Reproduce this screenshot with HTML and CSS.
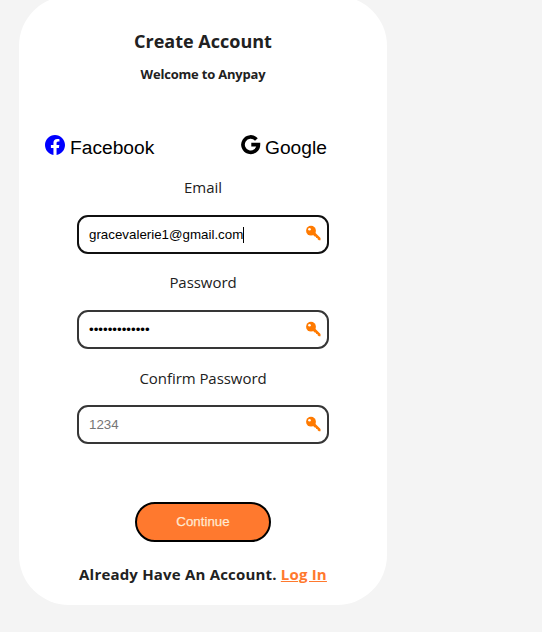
FILE: index.html
```
<!DOCTYPE html>
<html lang="en">
<head>
<meta charset="utf-8">
<title>Create Account</title>
<link rel="stylesheet" href="styles.css">
</head>
<body>
<svg width="0" height="0" class="defs" aria-hidden="true">
  <symbol id="key" viewBox="0 0 16 16">
    <circle cx="6" cy="5.700" r="4.900"/>
    <path d="M9.300 6.800 15.500 13v2.300h-1.600l-1.200-1.100-.3-1.100-1.200-.2-.3-1.200-1.200-.2L7 9z"/>
    <circle cx="4.500" cy="4.300" r="1.300" fill="#fff"/>
  </symbol>
</svg>
<main class="card">
  <h1 class="title"><span>Create Account</span></h1>
  <p class="subtitle"><span>Welcome to Anypay</span></p>
  <div class="socials">
    <div class="social">
      <svg class="fb" viewBox="0 0 24 24"><path d="M24 12.070C24 5.410 18.630 0 12 0S0 5.410 0 12.070C0 18.100 4.390 23.090 10.130 24v-8.440H7.080v-3.490h3.050V9.410c0-3.020 1.790-4.690 4.530-4.690 1.310 0 2.680.24 2.680.24v2.970h-1.510c-1.490 0-1.960.93-1.960 1.890v2.250h3.330l-.53 3.490h-2.800V24C19.610 23.090 24 18.100 24 12.070z"/></svg>
      <span>Facebook</span>
    </div>
    <div class="social">
      <svg class="google" viewBox="0 0 19 20"><path d="M15.400 4.500A7.700 7.700 0 1 0 17.400 9.700H10.300" fill="none" stroke="currentColor" stroke-width="3.700"/></svg>
      <span>Google</span>
    </div>
  </div>
  <form class="form">
    <div class="label">Email</div>
    <div class="field active"><span>gracevalerie1@gmail.com</span><i class="caret"></i><svg class="key"><use href="#key"/></svg></div>
    <div class="label password-label">Password</div>
    <div class="field"><span class="dots">•••••••••••••</span><svg class="key"><use href="#key"/></svg></div>
    <div class="label confirm-label">Confirm Password</div>
    <div class="field"><span class="placeholder">1234</span><svg class="key"><use href="#key"/></svg></div>
    <button type="button" class="continue">Continue</button>
  </form>
  <p class="login">Already Have An Account. <a href="#">Log In</a></p>
</main>
</body>
</html>
```
FILE: styles.css
```
* { box-sizing: border-box; }
body {
  margin: 0;
  height: 632px;
  overflow: hidden;
  background: #f4f4f4;
  color: #212121;
  font-family: "Open Sans", "Noto Sans", sans-serif;
}
.defs { display: block; }
.card {
  width: 368px;
  height: 609px;
  margin: -4px 0 0 19px;
  padding-top: 33px;
  background: #fff;
  border-radius: 50px;
  text-align: center;
}
.title { margin: 0; font-size: 18px; line-height: 24px; font-weight: 700; letter-spacing: 0; }
.subtitle { margin: 12px 0 0; font-size: 13px; line-height: 18px; font-weight: 700; letter-spacing: -0.2px; }
.socials {
  display: grid;
  grid-template-columns: 196px auto;
  margin: 53px 0 0 26px;
  color: #000;
  font: 19.2px/24px "Liberation Sans", Arial, sans-serif;
}
.social { display: flex; gap: 5px; }
.fb, .google { width: 20px; height: 20px; margin-top: -1px; }
.google { width: 19px; overflow: visible; }
.fb { fill: #00f; }
.form { display: flex; flex-direction: column; align-items: center; margin-top: 16px; }
.label { height: 22px; font-size: 15px; line-height: 22px; margin-bottom: 17px; letter-spacing: -0.05px; }
.password-label { margin-top: 17px; }
.confirm-label { margin-top: 18px; margin-bottom: 16px; }
.field {
  display: flex;
  align-items: center;
  width: 252px;
  height: 39px;
  padding: 0 6px 0 10px;
  border: 2px solid #363636;
  border-radius: 11px;
  font: 13.333px/16px "Liberation Sans", Arial, sans-serif;
}
.active { border-color: #101010; color: #000; }
.caret { width: 1px; height: 16px; background: #000; }
.key { width: 16px; height: 16px; margin: 0 0 2px auto; fill: #ff7a00; }
.active .key { margin-bottom: 3px; }
.dots { color: #000; }
.placeholder { color: #757575; }
.continue {
  width: 136px;
  height: 40px;
  margin-top: 58px;
  padding: 0 0 2px;
  border: 2px solid #000;
  border-radius: 20px;
  background: #ff792e;
  color: #ffe8d0;
  font: 13.333px "Liberation Sans", Arial, sans-serif;
  -webkit-text-stroke: 0.25px #ffe8d0;
}
.login { margin: 21px 0 0; font-size: 15px; line-height: 22px; font-weight: 700; letter-spacing: 0.19px; }
.login a { color: #ff792e; }
```
